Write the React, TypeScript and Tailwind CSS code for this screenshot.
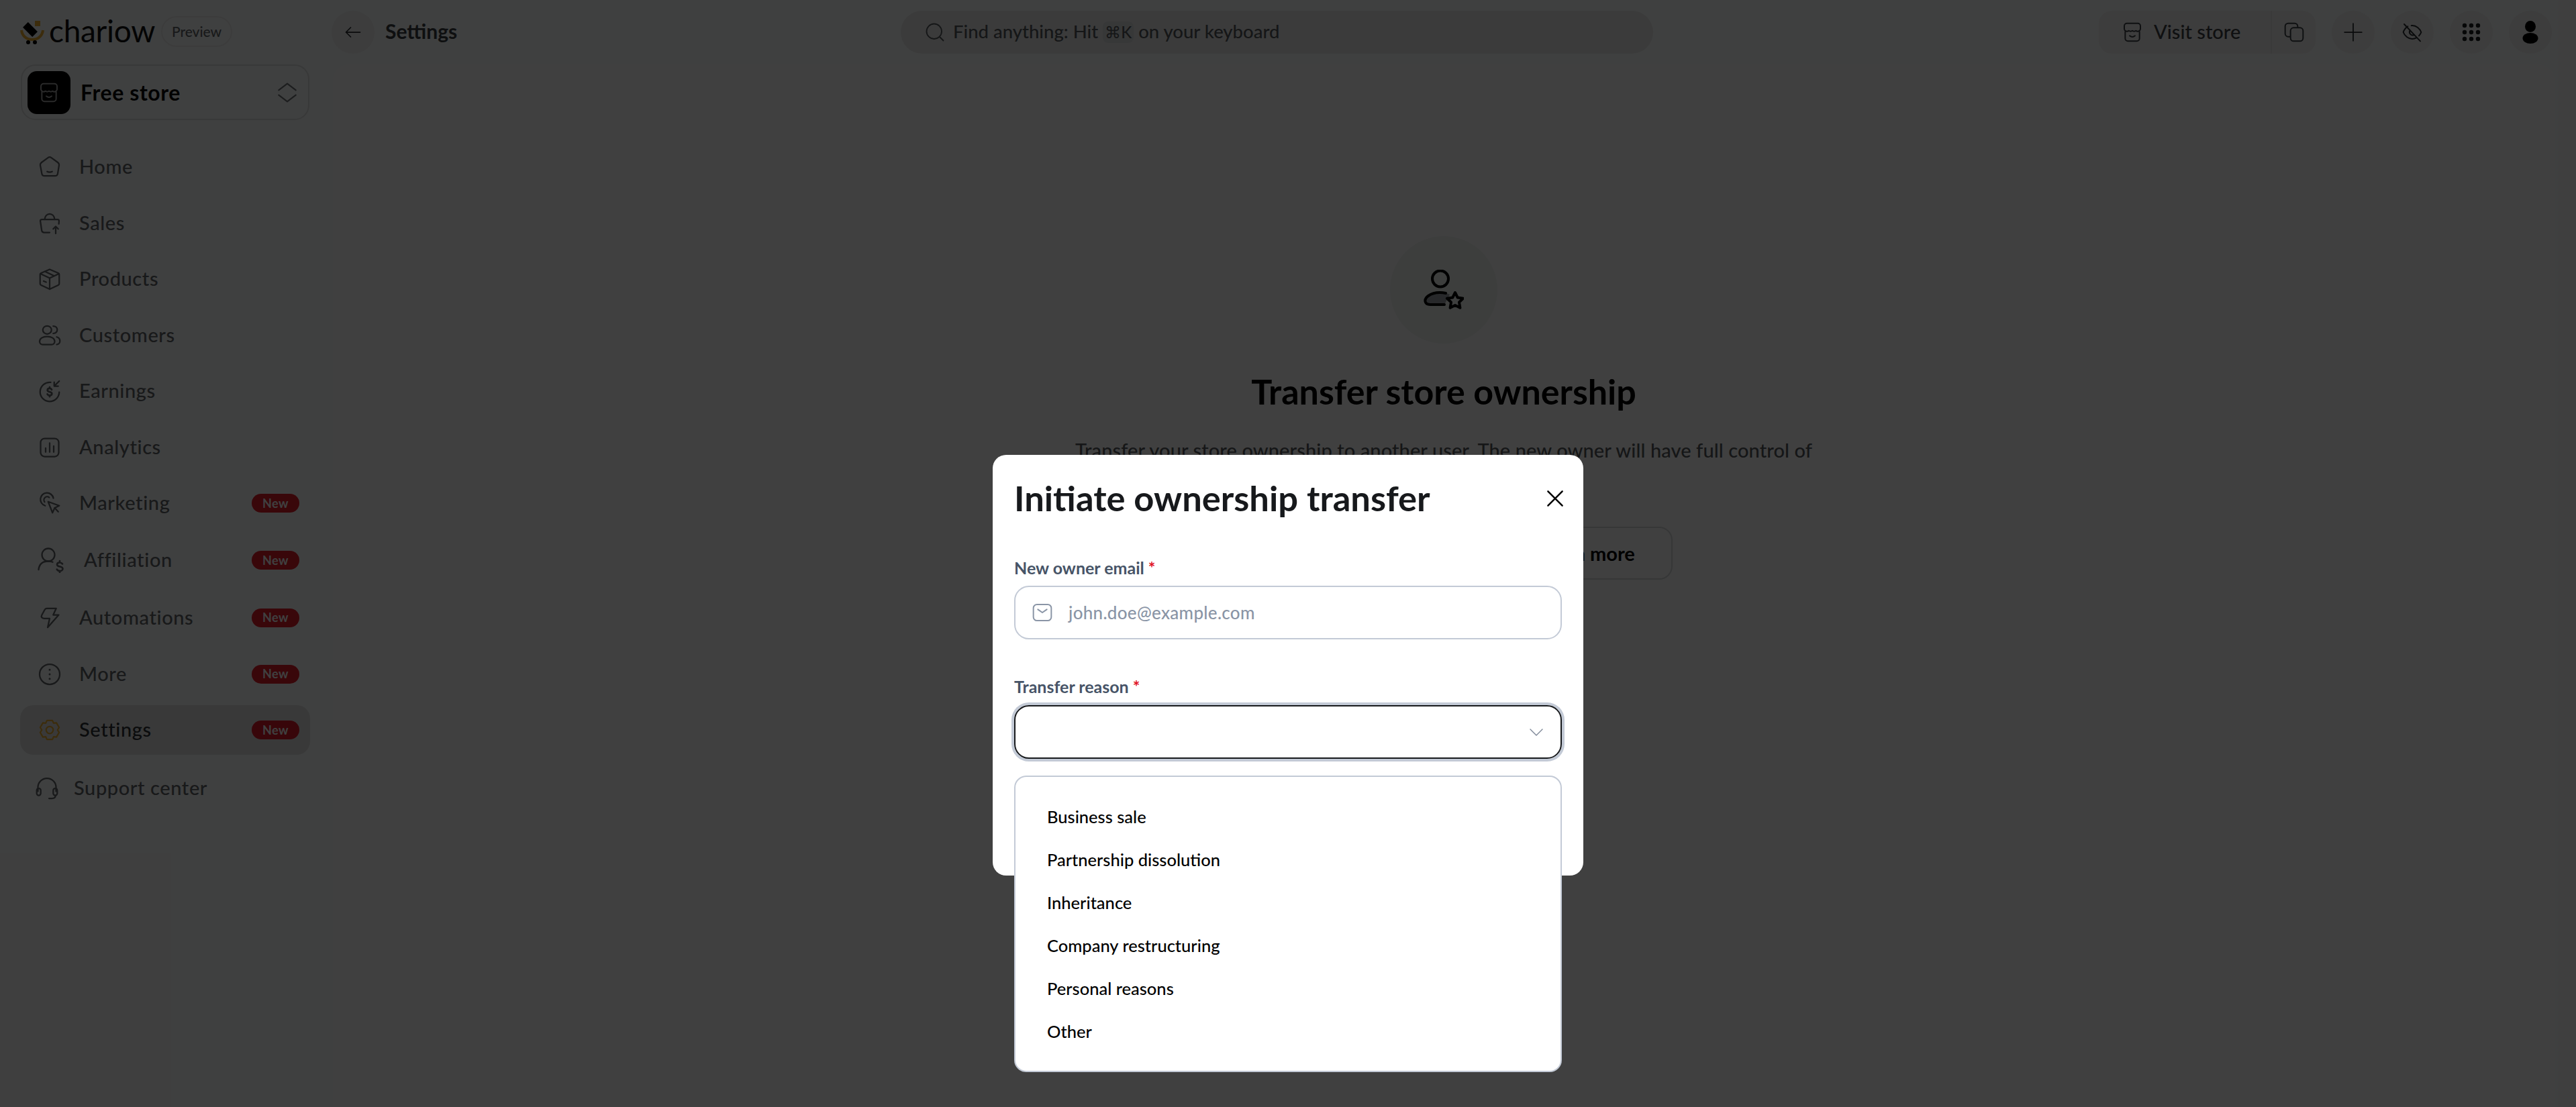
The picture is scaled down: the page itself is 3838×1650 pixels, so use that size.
import React from "react";

const S = ({ children, className = "", vb = "0 0 24 24", sw = 1.5 }: { children: React.ReactNode; className?: string; vb?: string; sw?: number }) => (
  <svg viewBox={vb} fill="none" stroke="currentColor" strokeWidth={sw} strokeLinecap="round" strokeLinejoin="round" className={className}>
    {children}
  </svg>
);

const StoreIcon = ({ className = "" }: { className?: string }) => (
  <S className={className}>
    <path d="M4 11.500V19a3 3 0 0 0 3 3h10a3 3 0 0 0 3-3v-7.500" />
    <path d="M6 2h12a3 3 0 0 1 3 3v3.500a3 3 0 0 1-5 1.800 3.500 3.500 0 0 1-4 0 3.500 3.500 0 0 1-4 0A3 3 0 0 1 3 8.500V5a3 3 0 0 1 3-3Z" />
    <path d="M9 16c1.800 1.500 4.200 1.500 6 0" />
  </S>
);

const icons: Record<string, React.ReactNode> = {
  Home: (
    <S className="w-[36px] h-[36px]">
      <path d="M10.300 2.700a2.800 2.800 0 0 1 3.400 0l6.500 4.800c.9.700 1.300 1.800 1.100 2.900l-1.300 8a2.800 2.800 0 0 1-2.800 2.400H7a2.800 2.800 0 0 1-2.800-2.400l-1.500-8c-.2-1.100.2-2.200 1.100-2.900Z" />
      <path d="M9.500 16.500c1.600.8 3.400.8 5 0" />
    </S>
  ),
  Sales: (
    <S className="w-[36px] h-[36px]">
      <path d="M12 21H6.500a2.500 2.500 0 0 1-2.400-2L2.700 9.500A1.500 1.500 0 0 1 4.200 8h15.600a1.500 1.500 0 0 1 1.500 1.500l-.2 3" />
      <path d="M7 8c.4-3.200 2.400-5.500 5-5.500s4.600 2.300 5 5.500" />
      <path d="M18 22v-7M15.500 17.500 18 15l2.500 2.500" />
    </S>
  ),
  Products: (
    <S className="w-[36px] h-[36px]">
      <path d="M12 2.300 20.500 6c.6.300 1 .9 1 1.500v9c0 .6-.4 1.200-1 1.500L12 22l-8.500-4c-.6-.3-1-.9-1-1.500v-9c0-.6.400-1.200 1-1.500Z" />
      <path d="M2.800 6.700 12 11l9.200-4.300M12 11v11M7.500 4.500l9 4.300M6 14l2.500 1" />
    </S>
  ),
  Customers: (
    <S className="w-[36px] h-[36px]">
      <ellipse cx="9.500" cy="6.500" rx="4.300" ry="4" />
      <path d="M15.500 2.700c2.500 0 4 1.600 4 3.600s-1.500 3.500-4 3.700" />
      <path d="M2 18c0-3 3-5 7.500-5s7.500 2 7.500 5c0 2-1.500 3-3 3H5c-1.500 0-3-1-3-3Z" />
      <path d="M19 13.500c2 .6 3.200 2.200 3.200 4s-1.300 3.300-3.200 3.500" />
    </S>
  ),
  Earnings: (
    <S className="w-[36px] h-[36px]">
      <path d="M13 3.300A9.500 9.500 0 1 0 21.500 13" />
      <path d="M21.500 2 16.500 7M16.500 3v4h4" />
      <path d="M14 10.500c-.5-.8-1.200-1.200-2-1.200-1.300 0-2.200.7-2.200 1.700 0 2.400 4.400 1.100 4.400 3.500 0 1-.9 1.800-2.200 1.800-1 0-1.800-.5-2.300-1.300M12 8v1.300M12 16.300v1.200" strokeWidth="1.800" />
    </S>
  ),
  Analytics: (
    <S className="w-[36px] h-[36px]">
      <rect x="3" y="3" width="18" height="18" rx="4" />
      <path d="M8 16.500v-4M12 16.500v-9M16 16.500v-6" />
    </S>
  ),
  Marketing: (
    <S className="w-[36px] h-[36px]">
      <path d="m10.500 10.500 11 4-4.500 2.200-2.200 4.800Z" />
      <path d="M17 16.700l3.500 3.800" />
      <path d="M7.500 14.500A6.500 6.500 0 1 1 15.700 7" />
      <path d="M7 10.800A3.200 3.200 0 0 1 11.500 6.300" />
    </S>
  ),
  Affiliation: (
    <svg viewBox="0 0 40 38" fill="none" stroke="currentColor" strokeWidth="2.300" strokeLinecap="round" strokeLinejoin="round" className="w-[40px] h-[38px]">
      <circle cx="16" cy="11" r="9.500" />
      <path d="M1.500 33C2.500 24.500 8 20.500 16 20.500c2.500 0 4.500.4 6.500 1.300" />
      <path d="M37 24.500c-1-1.500-2.300-2-4-2-2.500 0-4 1.200-4 3 0 4.200 8.500 2 8.500 6.200 0 1.800-1.800 3.300-4.200 3.300-2 0-3.500-.8-4.500-2.300M33 20v2.500M33 35v3" strokeWidth="2.600" />
    </svg>
  ),
  Automations: (
    <S className="w-[36px] h-[36px]">
      <path d="M9 2.500h9.500L15.500 9h5.500L10 21.500l2-9H6.500c-2.500 0-3.200-1.700-2.300-3.300L7 4c.4-.9 1.200-1.500 2-1.500Z" />
    </S>
  ),
  More: (
    <S className="w-[36px] h-[36px]">
      <circle cx="12" cy="12" r="10" />
      <path d="M12 7.500v.01M12 12v.01M12 16.500v.01" strokeWidth="2" />
    </S>
  ),
  Settings: (
    <S className="w-[36px] h-[36px] text-[#f0b030]">
      <circle cx="12" cy="12" r="3.500" />
      <path d="M9.300 2.600h5.400l1.200 2.600 2.800-.3 2.700 4.600-1.600 2.500 1.600 2.500-2.700 4.600-2.800-.3-1.200 2.600H9.300l-1.200-2.600-2.800.3-2.700-4.600L4.200 12 2.600 9.500l2.700-4.600 2.800.3Z" />
    </S>
  ),
  Support: (
    <S className="w-[36px] h-[36px]">
      <path d="M3 15V11a9 9 0 0 1 18 0v4" />
      <rect x="1.800" y="12" width="4" height="7" rx="2" />
      <rect x="18.200" y="12" width="4" height="7" rx="2" />
      <path d="M20.500 19c0 2-1.500 3-3.500 3h-3" />
    </S>
  ),
};

type Item = { n: string; key: string; h: string; badge?: boolean; gap?: string };
const items: Item[] = [
  { n: "Home", key: "Home", h: "h-[74px]" },
  { n: "Sales", key: "Sales", h: "h-[74px]" },
  { n: "Products", key: "Products", h: "h-[74px]" },
  { n: "Customers", key: "Customers", h: "h-[74px]" },
  { n: "Earnings", key: "Earnings", h: "h-[74px]" },
  { n: "Analytics", key: "Analytics", h: "h-[74px]" },
  { n: "Marketing", key: "Marketing", h: "h-[74px]", badge: true },
  { n: "Affiliation", key: "Affiliation", h: "h-[77px]", badge: true, gap: "gap-[29px]" },
  { n: "Automations", key: "Automations", h: "h-[75px]", badge: true },
  { n: "More", key: "More", h: "h-[74px]", badge: true },
  { n: "Settings", key: "Settings", h: "h-[74px]", badge: true },
];

const Row = ({ it }: { it: Item }) => {
  const active = it.n === "Settings";
  return (
    <div className={`flex items-center ${it.h} pl-[26px] pr-[16px] rounded-[20px] ${active ? "bg-[#e2e4e3] text-[#2c3034]" : "text-[#5f6468]"}`}>
      <div className={`flex items-center flex-1 ${it.gap ?? "gap-[26px]"}`}>
        {icons[it.key]}
        <span className="text-[29px] -mt-[2px] font-medium tracking-[0.6px]">{it.n}</span>
      </div>
      {it.badge && (
        <span className="w-[71px] h-[28px] rounded-full bg-[#e0101f] text-white text-[18px] font-bold flex items-center justify-center tracking-[0.5px] opacity-[0.95]">New</span>
      )}
    </div>
  );
};

const Circle = ({ children }: { children: React.ReactNode }) => (
  <div className="w-[64px] h-[64px] rounded-full bg-[#f2f3f3] flex items-center justify-center text-[#2a2d30]">{children}</div>
);

export default function App() {
  return (
    <div className="relative flex h-[1650px] w-[3838px] overflow-hidden bg-[#fbfdfd] font-['Lato',sans-serif]">
      {/* sidebar */}
      <aside className="w-[496px] shrink-0 pl-[31px] flex flex-col">
        <div className="h-[96px] flex items-center">
          <svg viewBox="0 0 36 38" className="w-[36px] h-[38px] -ml-[1px] mt-[4px]">
            <path d="M2 14C3 23 10 28 18 28S33 23 34 14" fill="none" stroke="#f0b030" strokeWidth="4" />
            <rect x="5" y="7.500" width="20" height="11" transform="rotate(45 15 13)" fill="#000" />
            <rect x="22" y="0" width="8" height="8" fill="#f0b030" />
            <circle cx="12" cy="32" r="3" fill="#000" />
            <circle cx="22" cy="32" r="3" fill="#000" />
          </svg>
          <span className="ml-[7px] text-[46px] leading-none text-[#111] tracking-[-0.3px] -mt-[4px]">chariow</span>
          <span className="ml-[9px] w-[106px] h-[46px] -mt-[2px] rounded-full border-2 border-[#eef0f0] flex items-center justify-center text-[21px] font-medium text-[#5f6468]">Preview</span>
        </div>
        <div className="w-[430px] h-[83px] rounded-[22px] border-2 border-[#e0e2e2] flex items-center pl-[8px] pr-[14px]">
          <div className="w-[64px] h-[64px] rounded-[14px] bg-black flex items-center justify-center text-[#a8a8a8]">
            <StoreIcon className="w-[32px] h-[32px]" />
          </div>
          <span className="ml-[15px] flex-1 text-[32px] font-bold text-[#0a0a0a] tracking-[0.6px]">Free store</span>
          <S className="w-[34px] h-[34px] text-[#6f7478]">
            <path d="m3 9.500 9-7 9 7M3 14.500l9 7 9-7" />
          </S>
        </div>
        <nav className="w-[432px] -ml-[1px] mt-[33px] flex flex-col gap-[9.5px]">
          {items.map((it) => (
            <Row key={it.n} it={it} />
          ))}
          <div className="mt-[3px] h-[74px] pl-[22px] flex items-center gap-[22px] text-[#5f6468]">
            {icons.Support}
            <span className="text-[29px] -mt-[2px] font-medium tracking-[0.6px]">Support center</span>
          </div>
        </nav>
      </aside>

      {/* main column */}
      <div className="flex-1 flex flex-col min-w-0">
        <header className="h-[96px] shrink-0 flex items-center justify-between pr-[36px] -ml-[2px]">
          <div className="flex flex-1 items-center">
            <Circle>
              <S className="w-[28px] h-[28px]" sw={1.5}>
                <path d="M21 12H3M9 6l-6 6 6 6" />
              </S>
            </Circle>
            <span className="ml-[16px] -mt-[3px] text-[30px] font-bold text-[#3a3d40]">Settings</span>
          </div>
          <div className="w-[1121px] mr-[664px] h-[64px] rounded-full bg-[#eaeceb] flex items-center pl-[36px] text-[#55595d] text-[27.5px]">
            <S className="w-[30px] h-[30px]">
              <circle cx="11" cy="11" r="9" />
              <path d="m18 18 4 4" />
            </S>
            <span className="ml-[12px] -mt-[2px] font-medium">Find anything: Hit</span>
            <span className="ml-[7px] w-[46px] h-[32px] rounded-[8px] bg-[#dcdee0] text-[24px] flex items-center justify-center font-medium">⌘K</span>
            <span className="ml-[7px] -mt-[2px] font-medium">on your keyboard</span>
          </div>
          <div className="flex items-center gap-[24px]">
            <div className="flex h-[64px] rounded-[20px] bg-[#f2f3f3] text-[#3e4246]">
              <div className="w-[258px] flex items-center pl-[34px] gap-[16px] border-r-2 border-[#e6e8e8]">
                <StoreIcon className="w-[32px] h-[32px]" />
                <span className="text-[29px] -mt-[2px] font-medium">Visit store</span>
              </div>
              <div className="w-[65px] flex items-center justify-center">
                <S className="w-[32px] h-[32px]">
                  <rect x="2" y="2" width="14" height="15" rx="3.500" />
                  <rect x="8" y="7" width="14" height="15" rx="3.500" className="fill-[#f2f3f3]" />
                </S>
              </div>
            </div>
            <Circle>
              <S className="w-[28px] h-[28px]" sw={1.5}>
                <path d="M12 1v22M1 12h22" />
              </S>
            </Circle>
            <Circle>
              <S className="w-[32px] h-[32px]">
                <path d="M3 3l18 19" />
                <path d="M7 5.500C4.500 7 2.800 9.500 2 12c1.500 4 5.500 7.500 10 7.500 1.700 0 3.200-.4 4.500-1.200M11 4.600c.3 0 .7-.1 1-.1 4.500 0 8.500 3.500 10 7.500-.5 1.500-1.400 2.900-2.500 4" />
                <path d="M9.500 10a3.500 3.500 0 0 0 4.500 5" />
              </S>
            </Circle>
            <Circle>
              <svg viewBox="0 0 28 28" className="w-[28px] h-[28px] fill-[#1a1c1e]">
                {[4, 14, 24].flatMap((y) => [4, 14, 24].map((x) => <circle key={`${x}-${y}`} cx={x} cy={y} r="3.200" />))}
              </svg>
            </Circle>
            <Circle>
              <svg viewBox="0 0 24 34" className="w-[24px] h-[34px] fill-black">
                <ellipse cx="12" cy="8.500" rx="8" ry="8.500" />
                <ellipse cx="12" cy="26" rx="11.500" ry="8" />
              </svg>
            </Circle>
          </div>
        </header>

        <main className="flex-1 mr-[32px] rounded-t-[24px] bg-white flex flex-col items-center pt-[256px]">
          <div className="w-[160px] h-[160px] rounded-full bg-[#f1f5f4] flex items-center justify-center">
            <svg viewBox="0 0 60 60" fill="none" stroke="#000" strokeWidth="4" strokeLinecap="round" strokeLinejoin="round" className="w-[60px] h-[60px]">
              <circle cx="25" cy="13.500" r="12" />
              <path d="M31 52H9c-9 0-9-8-3-13 5-3.500 12-5 18-5 5 0 10 .8 15 3z" fill="#9aa0a6" stroke="none" />
              <path d="M31 52H10c-9 0-10-8-3-13 5-3.500 11-5 17-5 3 0 6 .3 9 1" />
              <path d="m47 34 3.700 7.500 8.300 1.200-6 5.800 1.400 8.300-7.400-3.900-7.400 3.900 1.400-8.300-6-5.800 8.300-1.200z" fill="#f1f5f4" />
            </svg>
          </div>
          <h1 className="mt-[44px] text-[52px] leading-[54px] font-bold text-black">Transfer store ownership</h1>
          <p className="mt-[37px] h-[96px] w-[1120px] text-center text-[29px] leading-[48px] text-[#55595d] font-medium tracking-[0.1px]">
            Transfer your store ownership to another user. The new owner will have full control of
          </p>
          <div className="mt-[42px] flex gap-[24px]">
            <div className="w-[400px] h-[79px] rounded-[20px] bg-black" />
            <button className="w-[258px] h-[79px] rounded-[20px] border-2 border-[#d8dadc] text-black text-[29px] font-bold">Learn more</button>
          </div>
        </main>
      </div>

      {/* overlay and dialog */}
      <div className="absolute inset-0 bg-black/75 flex justify-center pt-[678px]">
        <div className="relative w-[880px] h-[627px] rounded-[20px] bg-white px-[32px] text-[#1f2125]">
          <div className="flex items-center justify-between h-[130px]">
            <h2 className="text-[52.5px] -mt-[2px] font-bold text-[#17191c]">Initiate ownership transfer</h2>
            <S className="w-[30px] h-[30px] text-black -mr-[5px]" sw={2}>
              <path d="M3.500 3.500l17 17M20.500 3.500l-17 17" />
            </S>
          </div>
          <label className="block mt-[23px] text-[25px] font-bold text-[#475467] leading-[30px]">
            New owner email <span className="text-[#e0101f]">*</span>
          </label>
          <div className="mt-[12px] h-[80px] rounded-[22px] border-2 border-[#c3cad6] flex items-center pl-[24px]">
            <S className="w-[32px] h-[32px] text-[#8a95a6]">
              <rect x="2" y="3" width="20" height="18" rx="4" />
              <path d="m7 8.500 5 3.500 5-3.500" />
            </S>
            <span className="ml-[23px] text-[26px] font-medium text-[#8a95a6] tracking-[0.3px]">john.doe@example.com</span>
          </div>
          <label className="block mt-[55px] text-[25px] font-bold text-[#475467] leading-[30px]">
            Transfer reason <span className="text-[#e0101f]">*</span>
          </label>
          <div className="mt-[13px] h-[80px] rounded-[22px] border-2 border-[#17191c] shadow-[0_0_0_4px_#c3cad6] flex items-center justify-end pr-[24px]">
            <S className="w-[24px] h-[24px] text-[#7d8797]" sw={1.400}>
              <path d="m3 8 9 9 9-9" />
            </S>
          </div>
          <div className="absolute left-[32px] top-[478px] w-[816px] h-[442px] rounded-[18px] border-2 border-[#c3cad6] bg-white pt-[27px] pl-[47px] text-black text-[25.500px] font-medium">
            {["Business sale", "Partnership dissolution", "Inheritance", "Company restructuring", "Personal reasons", "Other"].map((o) => (
              <div key={o} className="h-[64px] flex items-center">{o}</div>
            ))}
          </div>
        </div>
      </div>
    </div>
  );
}
